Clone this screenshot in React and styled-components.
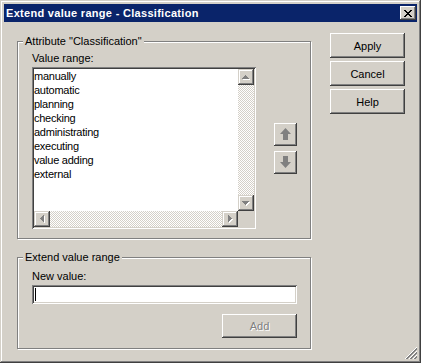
import styled, { createGlobalStyle } from "styled-components";

const FACE = "#D4D0C8";

const GlobalStyle = createGlobalStyle`
  html, body {
    margin: 0;
    padding: 0;
    background: ${FACE};
  }
  * {
    box-sizing: border-box;
  }
`;

const values = [
  "manually",
  "automatic",
  "planning",
  "checking",
  "administrating",
  "executing",
  "value adding",
  "external",
];

const ARROWS = {
  up: { w: 7, h: 4, d: "M3 0h1v1h1v1h1v1h1v1H0V3h1V2h1V1h1z" },
  down: { w: 7, h: 4, d: "M0 0h7v1H6v1H5v1H4v1H3V3H2V2H1V1H0z" },
  left: { w: 4, h: 7, d: "M3 0h1v7H3V6H2V5H1V4H0V3h1V2h1V1h1z" },
  right: { w: 4, h: 7, d: "M0 0h1v1h1v1h1v1h1v1H3v1H2v1H1v1H0z" },
};

const TinyArrow = ({ dir }) => {
  const a = ARROWS[dir];
  return (
    <svg width={a.w + 1} height={a.h + 1} shapeRendering="crispEdges">
      <path d={a.d} fill="#fff" transform="translate(1 1)" />
      <path d={a.d} fill="#808080" />
    </svg>
  );
};

const MoveArrow = ({ down }) => (
  <svg width="11" height="12" viewBox="0 0 11 12">
    <path
      d="M5.5 0L11 6H8v6H3V6H0z"
      fill="#808080"
      transform={down ? "rotate(180 5.5 6)" : undefined}
    />
  </svg>
);

const Window = styled.div`
  width: 421px;
  height: 363px;
  padding: 4px;
  display: flex;
  flex-direction: column;
  background: ${FACE};
  font-family: "Liberation Sans", Tahoma, Arial, sans-serif;
  font-size: 11px;
  color: #000;
  box-shadow: inset -1px -1px #404040, inset 1px 1px ${FACE},
    inset -2px -2px #808080, inset 2px 2px #fff;
`;

const TitleBar = styled.div`
  height: 18px;
  flex: none;
  display: flex;
  align-items: center;
  justify-content: space-between;
  padding: 0 1px 0 2px;
  background: #0a246a;
  color: #fff;
  font-weight: bold;
  letter-spacing: 0.3px;
  line-height: 18px;
`;

const CloseButton = styled.div`
  width: 16px;
  height: 14px;
  display: flex;
  align-items: center;
  justify-content: center;
  background: ${FACE};
  box-shadow: inset -1px -1px #404040, inset 1px 1px #fff,
    inset -2px -2px #808080, inset 2px 2px ${FACE};
`;

const Client = styled.div`
  flex: 1;
  position: relative;
  display: flex;
  gap: 19px;
  padding: 11px 12px 0 13px;
`;

const LeftColumn = styled.div`
  width: 294px;
  display: flex;
  flex-direction: column;
`;

const Group = styled.div`
  margin-top: ${(p) => p.$top}px;
  border: 1px solid #808080;
  box-shadow: inset 1px 1px #fff, 1px 1px #fff;
  padding: 0 13px ${(p) => p.$bottom}px 14px;
`;

const Legend = styled.div`
  width: fit-content;
  margin: -7px 0 0 -9px;
  padding: 0 2px;
  background: ${FACE};
  line-height: 13px;
`;

const FieldLabel = styled.div`
  margin-top: ${(p) => p.$top}px;
  line-height: 13px;
`;

const ListRow = styled.div`
  margin-top: 2px;
  display: flex;
  align-items: center;
  gap: 18px;
`;

const ListBox = styled.div`
  width: 224px;
  height: 162px;
  padding: 2px;
  background: #fff;
  display: grid;
  grid-template-columns: 1fr 16px;
  grid-template-rows: 1fr 16px;
  box-shadow: inset 1px 1px #808080, inset -1px -1px #fff,
    inset 2px 2px #404040, inset -2px -2px ${FACE};
`;

const Items = styled.div`
  line-height: 14px;
  letter-spacing: -0.25px;
`;

const Item = styled.div`
  white-space: nowrap;
`;

const ScrollBar = styled.div`
  display: flex;
  flex-direction: ${(p) => (p.$vertical ? "column" : "row")};
`;

const Track = styled.div`
  flex: 1;
  background: repeating-conic-gradient(${FACE} 0 25%, #fff 0 50%) 0 0 / 2px
    2px;
`;

const ScrollButton = styled.div`
  width: 16px;
  height: 16px;
  flex: none;
  display: flex;
  align-items: center;
  justify-content: center;
  background: ${FACE};
  box-shadow: inset -1px -1px #404040, inset 1px 1px ${FACE},
    inset -2px -2px #808080, inset 2px 2px #fff;
`;

const Corner = styled.div`
  background: ${FACE};
`;

const MoveButtons = styled.div`
  display: flex;
  flex-direction: column;
  gap: 5px;
`;

const MoveButton = styled.div`
  width: 23px;
  height: 23px;
  display: flex;
  align-items: center;
  justify-content: center;
  background: ${FACE};
  box-shadow: inset -1px -1px #404040, inset 1px 1px #fff,
    inset -2px -2px #808080, inset 2px 2px ${FACE};
`;

const EditBox = styled.div`
  margin-top: 2px;
  height: 19px;
  padding: 3px 0 0 3px;
  background: #fff;
  box-shadow: inset 1px 1px #808080, inset -1px -1px #fff,
    inset 2px 2px #404040, inset -2px -2px ${FACE};
`;

const Caret = styled.div`
  width: 1px;
  height: 13px;
  background: #000;
`;

const Button = styled.div`
  width: 75px;
  height: ${(p) => p.$h || 25}px;
  display: flex;
  align-items: center;
  justify-content: center;
  background: ${FACE};
  color: ${(p) => (p.$disabled ? "#808080" : "#000")};
  text-shadow: ${(p) => (p.$disabled ? "1px 1px #fff" : "none")};
  box-shadow: inset -1px -1px #404040, inset 1px 1px #fff,
    inset -2px -2px #808080, inset 2px 2px ${FACE};
`;

const ButtonRow = styled.div`
  margin-top: 10px;
  display: flex;
  justify-content: flex-end;
`;

const RightColumn = styled.div`
  display: flex;
  flex-direction: column;
  gap: 3px;
`;

const Grip = styled.svg`
  position: absolute;
  right: 0;
  bottom: 0;
`;

export default function App() {
  return (
    <>
      <GlobalStyle />
      <Window>
        <TitleBar>
          <span>Extend value range - Classification</span>
          <CloseButton>
            <svg width="8" height="7" shapeRendering="crispEdges">
              <path
                d="M0 0h2v1H0zM6 0h2v1H6zM1 1h2v1H1zM5 1h2v1H5zM2 2h4v1H2zM3 3h2v1H3zM2 4h4v1H2zM1 5h2v1H1zM5 5h2v1H5zM0 6h2v1H0zM6 6h2v1H6z"
                fill="#000"
              />
            </svg>
          </CloseButton>
        </TitleBar>
        <Client>
          <LeftColumn>
            <Group $top={8} $bottom={9}>
              <Legend>Attribute "Classification"</Legend>
              <FieldLabel $top={4}>Value range:</FieldLabel>
              <ListRow>
                <ListBox>
                  <Items>
                    {values.map((v) => (
                      <Item key={v}>{v}</Item>
                    ))}
                  </Items>
                  <ScrollBar $vertical>
                    <ScrollButton>
                      <TinyArrow dir="up" />
                    </ScrollButton>
                    <Track />
                    <ScrollButton>
                      <TinyArrow dir="down" />
                    </ScrollButton>
                  </ScrollBar>
                  <ScrollBar>
                    <ScrollButton>
                      <TinyArrow dir="left" />
                    </ScrollButton>
                    <Track />
                    <ScrollButton>
                      <TinyArrow dir="right" />
                    </ScrollButton>
                  </ScrollBar>
                  <Corner />
                </ListBox>
                <MoveButtons>
                  <MoveButton>
                    <MoveArrow />
                  </MoveButton>
                  <MoveButton>
                    <MoveArrow down />
                  </MoveButton>
                </MoveButtons>
              </ListRow>
            </Group>
            <Group $top={18} $bottom={10}>
              <Legend>Extend value range</Legend>
              <FieldLabel $top={6}>New value:</FieldLabel>
              <EditBox>
                <Caret />
              </EditBox>
              <ButtonRow>
                <Button $h={24} $disabled>
                  Add
                </Button>
              </ButtonRow>
            </Group>
          </LeftColumn>
          <RightColumn>
            <Button>Apply</Button>
            <Button>Cancel</Button>
            <Button>Help</Button>
          </RightColumn>
          <Grip width="13" height="13" viewBox="0 0 13 13">
            <g strokeWidth="1" shapeRendering="crispEdges">
              <path d="M1 13L13 1M5 13L13 5M9 13L13 9" stroke="#fff" />
              <path
                d="M2 13L13 2M3 13L13 3M6 13L13 6M7 13L13 7M10 13L13 10M11 13L13 11"
                stroke="#808080"
              />
            </g>
          </Grip>
        </Client>
      </Window>
    </>
  );
}
